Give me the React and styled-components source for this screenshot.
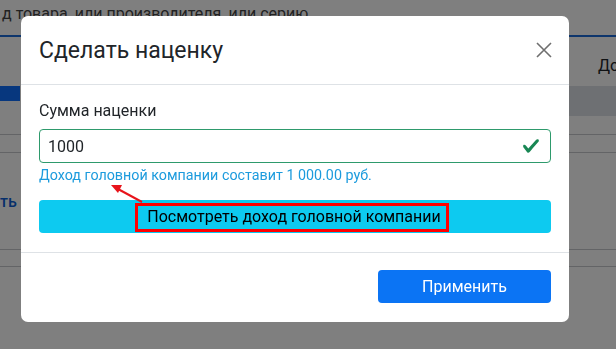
import React from 'react';
import styled, { createGlobalStyle } from 'styled-components';

const GlobalStyle = createGlobalStyle`
	html, body {
		margin: 0;
		padding: 0;
		background: #ffffff;
		font-family: Roboto, 'Noto Sans', sans-serif;
		color: #212529;
		overflow: hidden;
	}
	* {
		box-sizing: border-box;
	}
`;

const Page = styled.div`
	width: 616px;
	height: 349px;
	display: flex;
	flex-direction: column;
`;

const SearchBar = styled.div`
	height: 37px;
	padding: 4px 0 0 2px;
	font-size: 16px;
	color: #444;
	white-space: nowrap;
	border-bottom: 2px solid #1a6ad8;
`;

const TabRow = styled.div`
	height: 49px;
	display: flex;
	justify-content: flex-end;
	align-items: center;
	padding-top: 8px;
	font-size: 16px;
	color: #212529;
	span {
		width: 18px;
		white-space: nowrap;
	}
`;

const Band = styled.div`
	height: 30px;
	display: flex;
	justify-content: space-between;
	align-items: flex-start;
	background: #ffffff;
	div.blue {
		width: 20px;
		height: 15px;
		background: #0e6ffd;
	}
	div.grey {
		width: 60px;
		height: 30px;
		background: #dde1e6;
	}
`;

const TableLine = styled.div`
	height: ${(p) => p.h}px;
	border-bottom: 1px solid #c7c9cc;
	display: flex;
	align-items: center;
	font-size: 16px;
	font-weight: 500;
	color: #0d5fd6;
	white-space: nowrap;
`;

const Overlay = styled.div`
	position: fixed;
	inset: 0;
	background: rgba(0, 0, 0, 0.5);
	padding: 16px 0 0 21px;
`;

const Modal = styled.div`
	position: relative;
	width: 548px;
	background: #ffffff;
	border-radius: 7px;
	display: flex;
	flex-direction: column;
`;

const Header = styled.div`
	height: 69px;
	display: flex;
	align-items: center;
	justify-content: space-between;
	padding: 0 17px 0 18px;
	border-bottom: 1px solid #dee2e6;
	h5 {
		margin: 0;
		font-size: 23px;
		font-weight: 400;
		color: #212529;
		padding-top: 1px;
	}
`;

const CloseButton = styled.button`
	border: none;
	background: transparent;
	padding: 0;
	width: 17px;
	height: 17px;
	display: flex;
	align-items: center;
	justify-content: center;
	cursor: pointer;
`;

const Body = styled.div`
	padding: 15px 18px 19px;
	display: flex;
	flex-direction: column;
`;

const Label = styled.label`
	font-size: 16px;
	line-height: 22px;
	color: #212529;
	margin-bottom: 7px;
`;

const InputWrap = styled.div`
	height: 34px;
	border: 1px solid #2e9a6c;
	border-radius: 4px;
	display: flex;
	align-items: center;
	justify-content: space-between;
	padding: 0 10px 0 8px;
	input {
		border: none;
		outline: none;
		font-family: inherit;
		font-size: 16px;
		color: #212529;
		padding: 0;
		width: 200px;
		background: transparent;
	}
`;

const HelpText = styled.div`
	font-size: 14.3px;
	line-height: 20px;
	margin-top: 2px;
	color: #1c9bdd;
`;

const InfoButton = styled.button`
	margin-top: 15px;
	height: 33px;
	border: none;
	border-radius: 4px;
	background: #0dcaf0;
	font-family: inherit;
	color: #000000;
	display: flex;
	justify-content: center;
	align-items: flex-end;
	padding: 0 0 1px 0;
	cursor: pointer;
`;

const Marked = styled.span`
	display: block;
	width: 314px;
	height: 29px;
	border: 3px solid #ff0000;
	font-size: 16px;
	line-height: 22px;
	padding-left: 4px;
	text-align: center;
	margin-right: 6px;
`;

const Footer = styled.div`
	border-top: 1px solid #dee2e6;
	padding: 17px 18px 19px;
	display: flex;
	justify-content: flex-end;
`;

const PrimaryButton = styled.button`
	width: 173px;
	height: 33px;
	border: none;
	border-radius: 4px;
	background: #0b74f4;
	color: #ffffff;
	font-family: inherit;
	font-size: 16px;
	cursor: pointer;
`;

const Arrow = styled.svg`
	position: absolute;
	left: 87px;
	top: 166px;
	overflow: visible;
`;

export default function App() {
	return (
		<>
			<GlobalStyle />
			<Page>
				<SearchBar>д товара, или производителя, или серию</SearchBar>
				<TabRow>
					<span>До</span>
				</TabRow>
				<Band>
					<div className="blue" />
					<div className="grey" />
				</Band>
				<TableLine h={19} />
				<TableLine h={18} />
				<TableLine h={97}>ть с</TableLine>
				<TableLine h={17} />
			</Page>

			<Overlay>
				<Modal>
					<Header>
						<h5>Сделать наценку</h5>
						<CloseButton aria-label="Закрыть">
							<svg width="16" height="16" viewBox="0 0 16 16">
								<path
									d="M1 1 L15 15 M15 1 L1 15"
									stroke="#6f6f6f"
									strokeWidth="1.6"
									fill="none"
								/>
							</svg>
						</CloseButton>
					</Header>
					<Body>
						<Label htmlFor="markup">Сумма наценки</Label>
						<InputWrap>
							<input id="markup" defaultValue="1000" />
							<svg width="18" height="18" viewBox="0 0 8 8">
								<path
									fill="#198754"
									d="M2.3 6.73.6 4.53c-.4-1.04.46-1.4 1.1-.8l1.1 1.4 3.4-3.8c.6-.63 1.6-.27 1.2.7l-4 4.6c-.43.5-.8.4-1.1.1z"
								/>
							</svg>
						</InputWrap>
						<HelpText>
							Доход головной компании составит 1 000.00 руб.
						</HelpText>
						<InfoButton>
							<Marked>Посмотреть доход головной компании</Marked>
						</InfoButton>
					</Body>
					<Footer>
						<PrimaryButton>Применить</PrimaryButton>
					</Footer>
					<Arrow width="40" height="24">
						<line x1="34" y1="20" x2="10" y2="7" stroke="#e8141b" strokeWidth="2" />
						<polygon points="3,3 14,3 10,11" fill="#e8141b" />
					</Arrow>
				</Modal>
			</Overlay>
		</>
	);
}
